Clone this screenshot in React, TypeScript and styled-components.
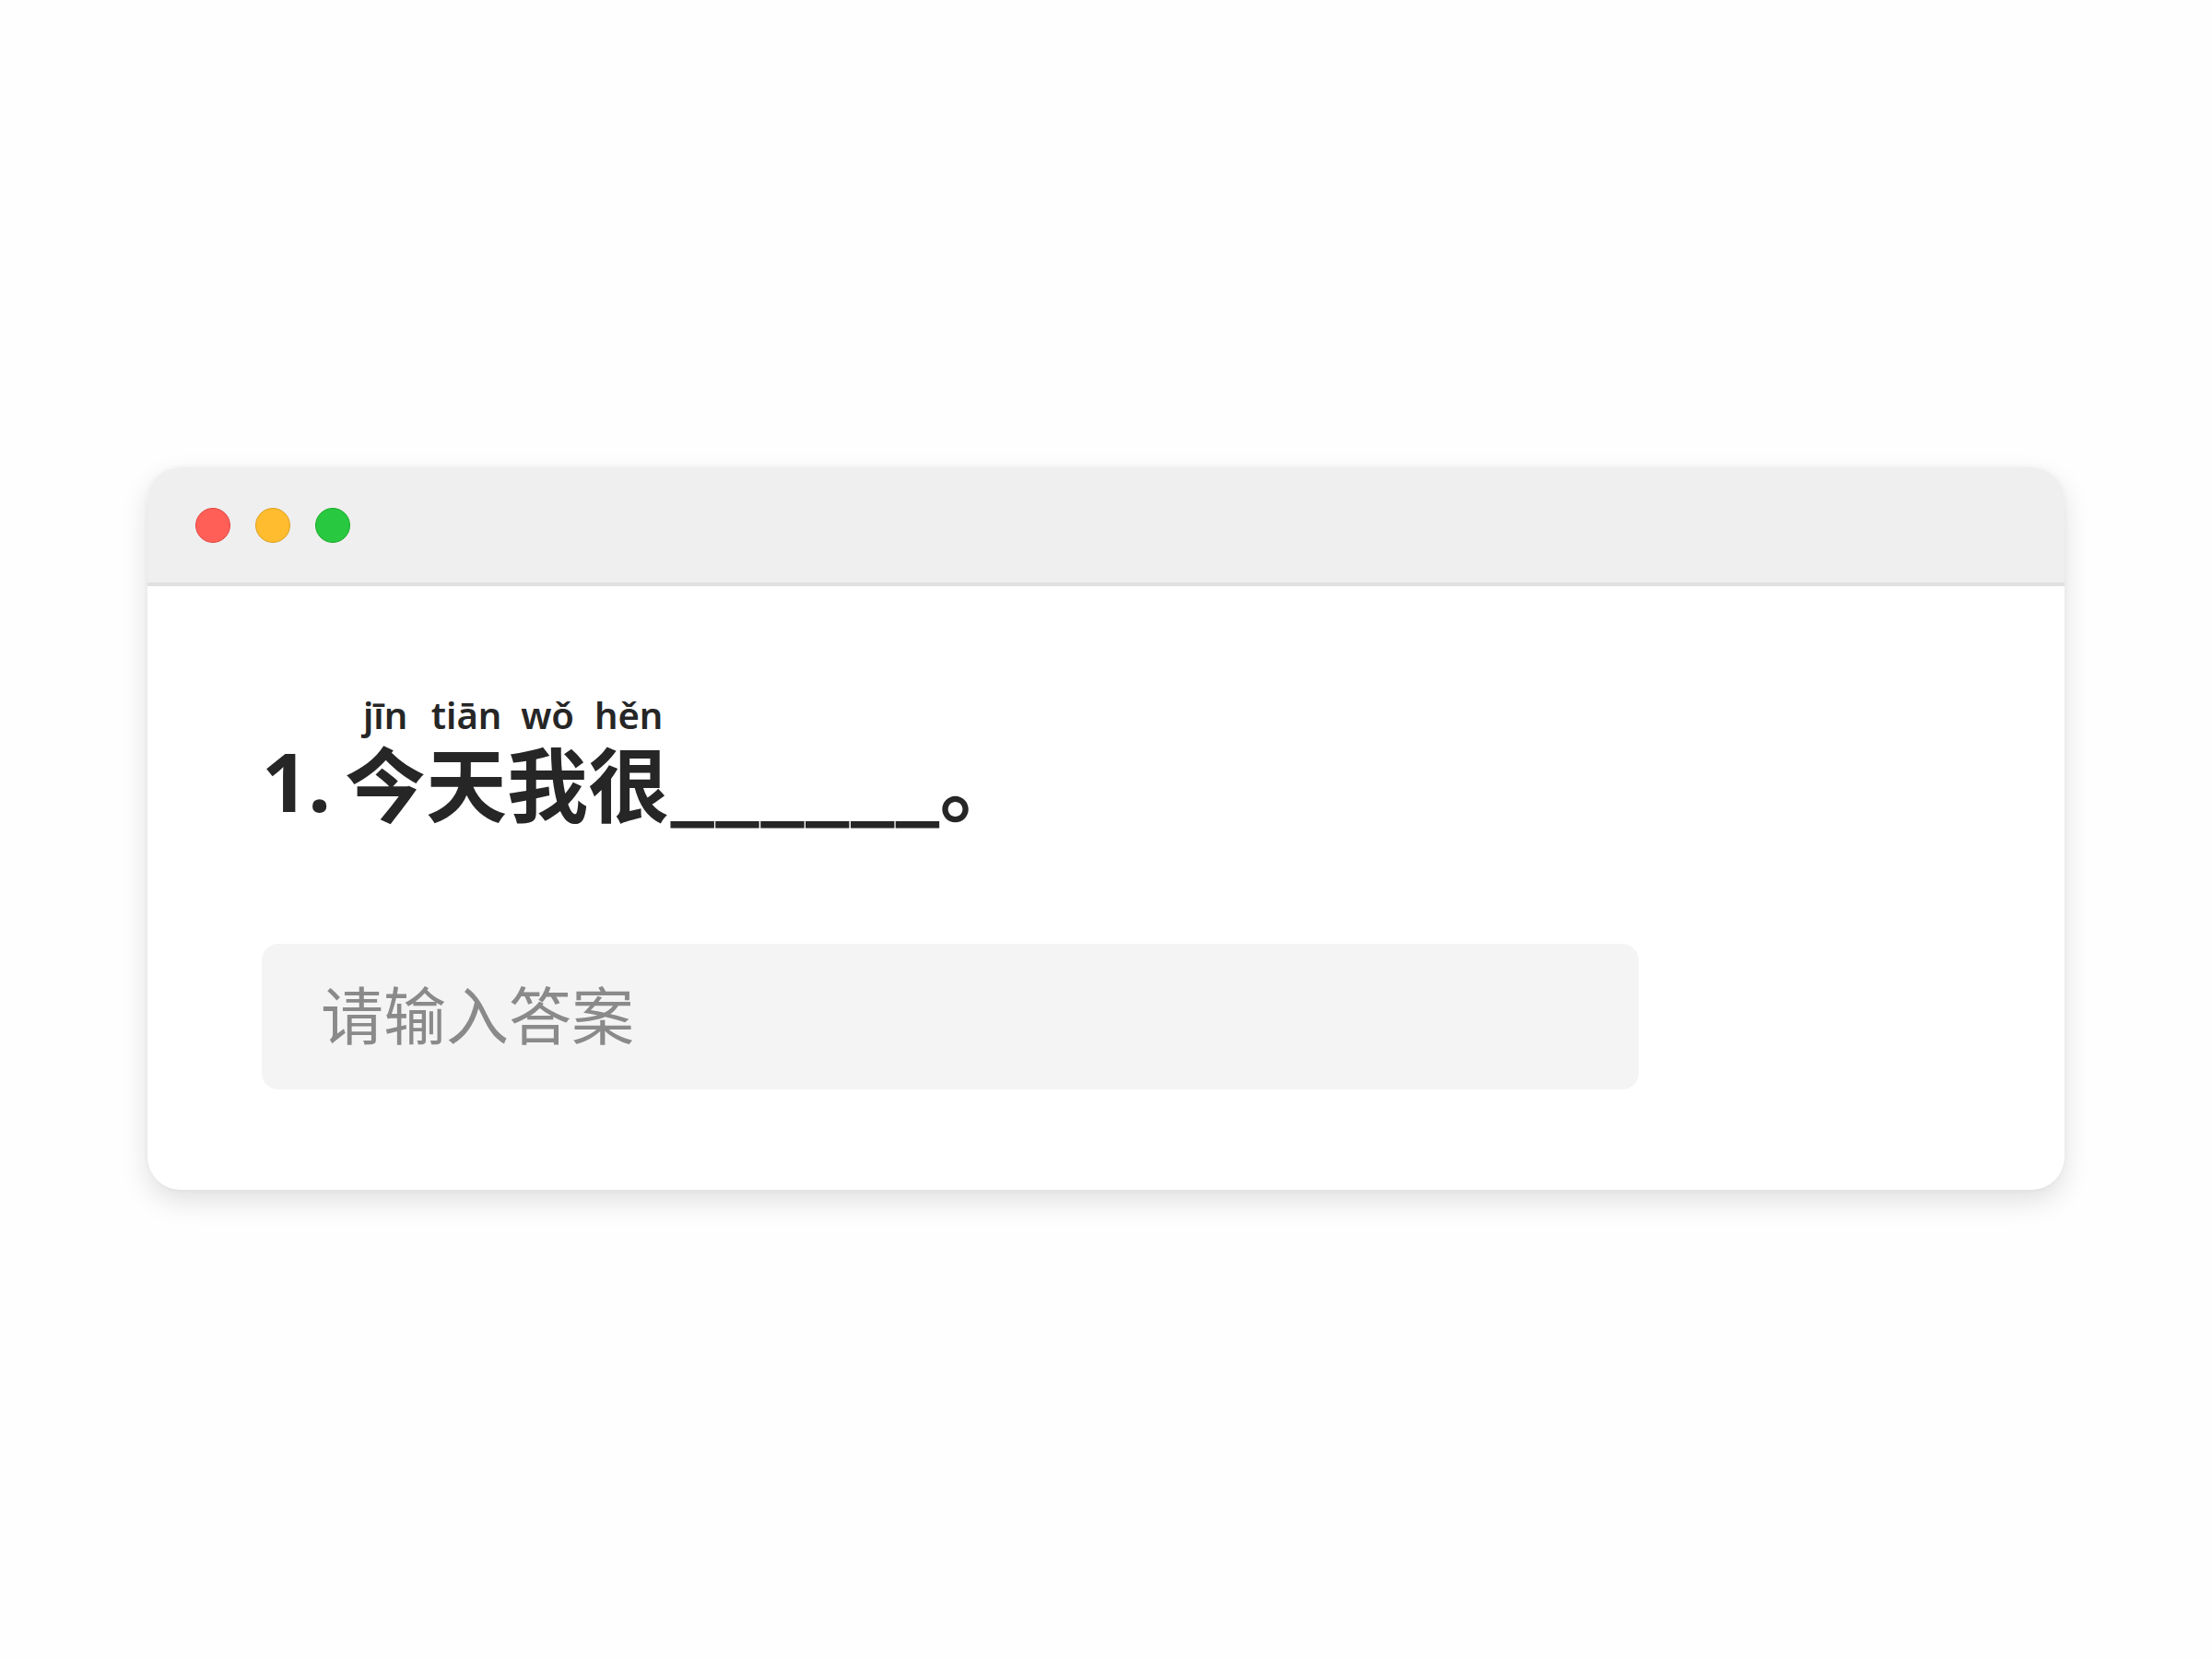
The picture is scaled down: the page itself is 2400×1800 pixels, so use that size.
import React from "react";
import styled, { createGlobalStyle } from "styled-components";

const GlobalStyle = createGlobalStyle`
  html, body {
    margin: 0;
    padding: 0;
    background: #fefefe;
  }
  body {
    font-family: "Noto Sans CJK SC", "Noto Sans", sans-serif;
  }
`;

const Page = styled.div`
  width: 2400px;
  height: 1800px;
  padding-top: 507px;
  box-sizing: border-box;
  background: #fefefe;
`;

const Window = styled.div`
  width: 2080px;
  margin: 0 auto;
  border-radius: 36px;
  background: #ffffff;
  box-shadow: 0 12px 30px rgba(0, 0, 0, 0.12), 0 0 6px rgba(0, 0, 0, 0.04);
  overflow: hidden;
`;

const TitleBar = styled.div`
  height: 125px;
  display: flex;
  align-items: center;
  gap: 27px;
  padding-left: 52px;
  background: #efefef;
  border-bottom: 4px solid #e0e0e0;
`;

const Dot = styled.span<{ $color: string; $ring: string }>`
  width: 38px;
  height: 38px;
  border-radius: 50%;
  box-sizing: border-box;
  background: ${(p) => p.$color};
  border: 1.5px solid ${(p) => p.$ring};
`;

const Body = styled.div`
  padding: 120px 124px 109px 124px;
`;

const Question = styled.div`
  display: flex;
  align-items: flex-end;
  color: #262626;
  font-weight: 700;
`;

const Number = styled.span`
  font-size: 88px;
  line-height: 1;
  margin-right: 15px;
  font-family: "Noto Sans", "Noto Sans CJK SC", sans-serif;
`;

const RubyGroup = styled.span`
  display: inline-flex;
  flex-direction: column;
  align-items: center;
`;

const Pinyin = styled.span`
  font-size: 40px;
  font-weight: 600;
  line-height: 1;
  margin-bottom: 7px;
  font-family: "Noto Sans", sans-serif;
`;

const Hanzi = styled.span`
  font-size: 88px;
  line-height: 1;
`;

const Blank = styled.span`
  font-size: 88px;
  line-height: 1;
  letter-spacing: -1px;
`;

const Answer = styled.div`
  margin-top: 133px;
  width: 1494px;
  height: 158px;
  border-radius: 18px;
  background: #f4f4f4;
  display: flex;
  align-items: center;
  padding: 0 0 10px 64px;
  box-sizing: border-box;
`;

const Placeholder = styled.span`
  font-size: 68px;
  color: #8a8a8a;
  font-weight: 400;
`;

const words: [string, string][] = [
  ["jīn", "今"],
  ["tiān", "天"],
  ["wǒ", "我"],
  ["hěn", "很"],
];

export default function App() {
  return (
    <Page>
      <GlobalStyle />
      <Window>
        <TitleBar>
          <Dot $color="#ff5f57" $ring="#e2463f" />
          <Dot $color="#febc2e" $ring="#dea123" />
          <Dot $color="#28c840" $ring="#1aab29" />
        </TitleBar>
        <Body>
          <Question>
            <Number>1.</Number>
            {words.map(([py, hz]) => (
              <RubyGroup key={hz}>
                <Pinyin>{py}</Pinyin>
                <Hanzi>{hz}</Hanzi>
              </RubyGroup>
            ))}
            <Blank>______。</Blank>
          </Question>
          <Answer>
            <Placeholder>请输入答案</Placeholder>
          </Answer>
        </Body>
      </Window>
    </Page>
  );
}
